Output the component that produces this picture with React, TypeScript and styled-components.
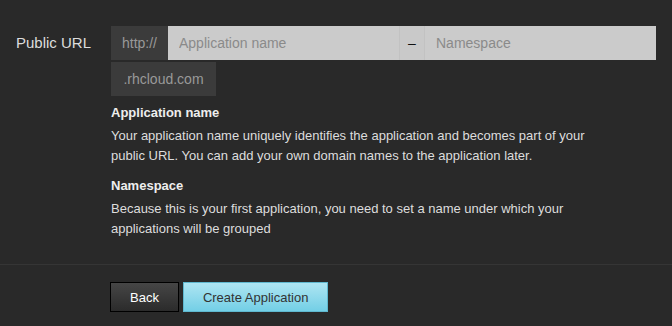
import React from 'react';
import styled, { createGlobalStyle } from 'styled-components';

const GlobalStyle = createGlobalStyle`
  html, body {
    margin: 0;
    padding: 0;
    background: #292929;
  }
  body {
    font-family: "Liberation Sans", Arial, sans-serif;
    color: #dddddd;
  }
`;

const Page = styled.div`
  width: 672px;
  height: 326px;
  background: #292929;
  overflow: hidden;
`;

const FieldRow = styled.div`
  display: flex;
  align-items: flex-start;
  padding: 26px 16px 0 16px;
  height: 265px;
  box-sizing: border-box;
  border-bottom: 1px solid #353535;
`;

const Label = styled.label`
  width: 95px;
  font-size: 15px;
  line-height: 34px;
  color: #dddddd;
`;

const Controls = styled.div`
  display: flex;
  flex-direction: column;
  width: 545px;
`;

const InputGroup = styled.div`
  display: flex;
  flex-wrap: wrap;
  row-gap: 2px;
`;

const Addon = styled.span<{ $light?: boolean; $w: number }>`
  display: inline-flex;
  align-items: center;
  justify-content: center;
  width: ${(p) => p.$w}px;
  height: 34px;
  box-sizing: border-box;
  font-size: 14px;
  color: ${(p) => (p.$light ? '#111111' : '#999999')};
  background: ${(p) => (p.$light ? '#c9c9c9' : '#3b3b3b')};
  border-left: ${(p) => (p.$light ? '1px solid #c2c2c2' : 'none')};
  border-right: ${(p) => (p.$light ? '1px solid #c2c2c2' : 'none')};
`;

const Input = styled.input<{ $w: number }>`
  width: ${(p) => p.$w}px;
  height: 34px;
  box-sizing: border-box;
  border: none;
  outline: none;
  background: #cbcbcb;
  padding: 0 11px;
  font-family: "Liberation Sans", Arial, sans-serif;
  font-size: 14px;
  color: #333333;
  &::placeholder {
    color: #8a8a8a;
  }
`;

const Help = styled.div`
  margin-top: 7px;
  width: 500px;
`;

const HelpTitle = styled.h4`
  margin: 0 0 3px 0;
  font-size: 13px;
  font-weight: bold;
  color: #eeeeee;
  line-height: 20px;
`;

const HelpText = styled.p`
  margin: 0 0 10px 0;
  font-size: 13px;
  line-height: 20px;
  color: #dddddd;
`;

const Actions = styled.div`
  display: flex;
  gap: 4px;
  padding: 17px 0 0 110px;
`;

const Button = styled.button<{ $primary?: boolean }>`
  height: 30px;
  padding: 0 19px;
  font-family: "Liberation Sans", Arial, sans-serif;
  font-size: 13px;
  cursor: pointer;
  border: 1px solid ${(p) => (p.$primary ? '#5fb8cf' : '#000000')};
  color: ${(p) => (p.$primary ? '#333333' : '#ffffff')};
  background: ${(p) =>
    p.$primary
      ? 'linear-gradient(#aee5f2, #73cfe6)'
      : 'linear-gradient(#464646, #2b2b2b)'};
`;

export default function App() {
  return (
    <Page>
      <GlobalStyle />
      <FieldRow>
        <Label>Public URL</Label>
        <Controls>
          <InputGroup>
            <Addon $w={57}>http://</Addon>
            <Input $w={231} placeholder="Application name" />
            <Addon $light $w={26}>–</Addon>
            <Input $w={231} placeholder="Namespace" />
            <Addon $w={105}>.rhcloud.com</Addon>
          </InputGroup>
          <Help>
            <HelpTitle>Application name</HelpTitle>
            <HelpText>
              Your application name uniquely identifies the application and becomes part of your
              public URL. You can add your own domain names to the application later.
            </HelpText>
            <HelpTitle>Namespace</HelpTitle>
            <HelpText>
              Because this is your first application, you need to set a name under which your
              applications will be grouped
            </HelpText>
          </Help>
        </Controls>
      </FieldRow>
      <Actions>
        <Button>Back</Button>
        <Button $primary>Create Application</Button>
      </Actions>
    </Page>
  );
}
